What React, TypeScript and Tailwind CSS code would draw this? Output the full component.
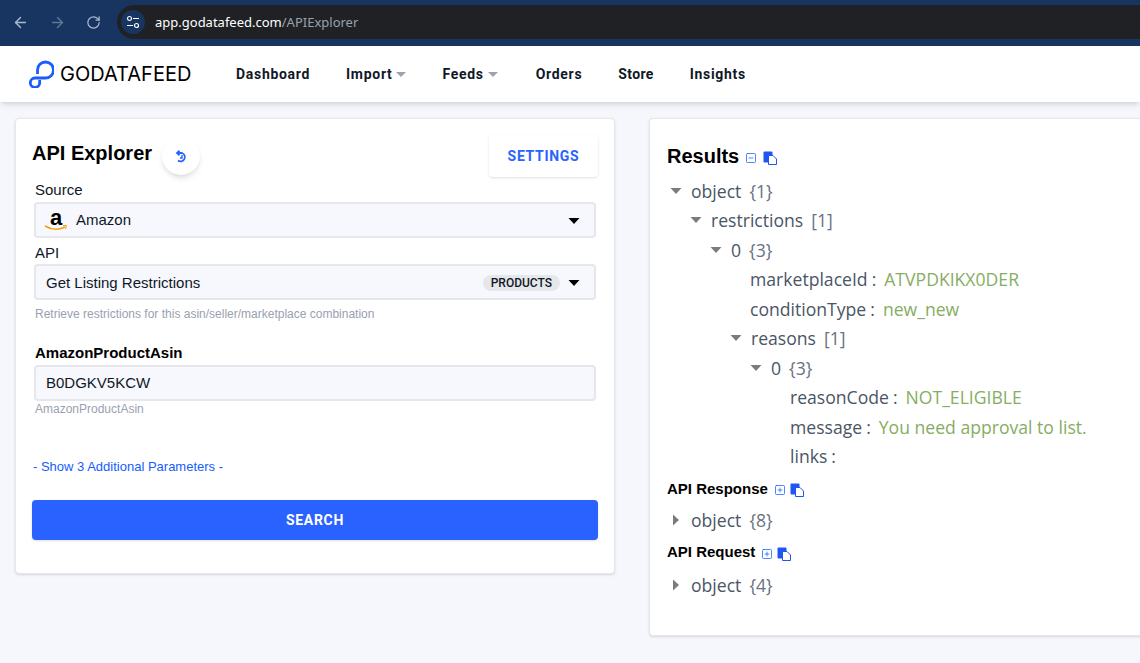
import React from "react";
import { ArrowLeft, ArrowRight, RotateCw, SquareMinus, SquarePlus } from "lucide-react";

const sans = { fontFamily: '"Liberation Sans", Arial, sans-serif' };
const roboto = { fontFamily: "Roboto, sans-serif" };

function Logo() {
  return (
    <svg width="26" height="28" viewBox="0 0 26 28" fill="none" stroke="#1a5cff" strokeWidth="2.800" className="shrink-0">
      <path d="M9.500 14 V10 A8 8 0 1 1 17.500 18 H7 A4.700 4.700 0 1 0 11.700 22.700 V20" />
    </svg>
  );
}

function NavCaret() {
  return (
    <svg width="10" height="5" viewBox="0 0 10 5" className="shrink-0">
      <path d="M0 0 H10 L5 5 Z" fill="#9ca3af" />
    </svg>
  );
}

function Caret({ open, dark }: { open?: boolean; dark?: boolean }) {
  return (
    <svg width="12" height="12" viewBox="0 0 12 12" className="shrink-0">
      {open ? (
        <path d="M0.500 3 H11.500 L6 9 Z" fill={dark ? "#000" : "#7c7c7c"} />
      ) : (
        <path d="M3 0.500 V11.500 L9 6 Z" fill="#7c7c7c" />
      )}
    </svg>
  );
}

function CopyIcon() {
  return (
    <svg width="14" height="14" viewBox="0 0 14 14" className="shrink-0">
      <rect x="0.500" y="0.500" width="9" height="11" rx="1" fill="#1f55f0" />
      <path d="M5.500 4.500 H10 L13.500 8 V13.500 H5.500 Z" fill="#fff" stroke="#1f55f0" strokeWidth="1" />
    </svg>
  );
}

function ResetIcon() {
  return (
    <svg width="13" height="13" viewBox="0 0 13 13" fill="none" stroke="#2962ff" strokeWidth="1.800" className="shrink-0">
      <path d="M4.500 0.800 L2 3 L4.500 5.200" />
      <path d="M2 3 H7 A4.300 4.300 0 1 1 3 10.500" />
      <path d="M7 5 V8 H5" strokeWidth="1.400" />
    </svg>
  );
}

function Node({
  depth,
  caret,
  name,
  count,
  value,
}: {
  depth: number;
  caret?: "open" | "closed";
  name: string;
  count?: string;
  value?: string;
}) {
  return (
    <div className="flex items-center h-[29.5px] text-[17.6px] text-gray-600 whitespace-nowrap" style={{ paddingLeft: depth * 20 }}>
      <span className="w-5 shrink-0 flex">{caret && <Caret open={caret === "open"} />}</span>
      <span className={caret ? "ml-px" : ""}>{name}</span>
      {count && <span className="ml-2 text-gray-500">{count}</span>}
      {value !== undefined && <span className="ml-1">:</span>}
      {value && <span className="ml-2 text-[#86ad62]">{value}</span>}
    </div>
  );
}

function Field({ children }: { children: React.ReactNode }) {
  return (
    <div className="h-9 flex items-center px-2.5 pt-0.5 rounded border-2 border-gray-200 bg-[#f7f8fd] text-gray-900">
      {children}
    </div>
  );
}

function SubHead({ title, className }: { title: string; className?: string }) {
  return (
    <div className={`flex items-center gap-1 h-7 ml-px text-[15px] font-bold text-black ${className ?? ""}`} style={sans}>
      {title}
      <SquarePlus size={12} strokeWidth={1.500} className="text-blue-600 ml-0.5 mt-0.5" />
      <span className="mt-0.5"><CopyIcon /></span>
    </div>
  );
}

export default function App() {
  return (
    <div className="h-[663px] overflow-hidden bg-[#f5f7fd] flex flex-col" style={sans}>
      <div className="h-[46px] shrink-0 bg-[#173560] flex items-center pl-3 pb-0.5 gap-5 text-[#a9b9cf]">
        <ArrowLeft size={17} />
        <ArrowRight size={17} className="text-[#5f7897]" />
        <RotateCw size={15} />
        <div className="flex-1 -ml-1 h-[34px] rounded-l-full bg-[#1f2125] flex items-center pl-1 gap-2.5 text-[13px]">
          <span className="w-6 h-6 rounded-full bg-[#173560] flex items-center justify-center">
            <svg width="14" height="14" viewBox="0 0 14 14" fill="none" stroke="#fff" strokeWidth="1.200">
              <circle cx="3.500" cy="3.500" r="2" />
              <path d="M7 3.500 H13 M1 10.500 H7" />
              <circle cx="10.500" cy="10.500" r="2" />
            </svg>
          </span>
          <span style={{ fontFamily: '"Noto Sans", sans-serif' }} className="text-white pt-px">
            app.godatafeed.com<span className="text-gray-400">/APIExplorer</span>
          </span>
        </div>
      </div>

      <div className="relative z-10 h-14 shrink-0 bg-white shadow-md flex items-center pl-7 gap-9 text-sm font-bold tracking-wider text-gray-900" style={roboto}>
        <div className="flex items-center gap-1.5 w-[172px]">
          <Logo />
          <span className="text-xl font-normal text-black tracking-normal" style={{ fontFamily: "Inter, sans-serif" }}>GODATAFEED</span>
        </div>
        <span>Dashboard</span>
        <span className="flex items-center gap-1">Import<NavCaret /></span>
        <span className="flex items-center gap-1 pr-0.5">Feeds<NavCaret /></span>
        <span>Orders</span>
        <span className="tracking-wide">Store</span>
        <span>Insights</span>
      </div>

      <div className="flex gap-[34px] pl-[15px] pt-4 items-start">
        <div className="w-[600px] shrink-0 h-[456px] bg-white rounded border border-gray-200 shadow-sm px-4 pt-4">
          <div className="flex items-start h-11">
            <h1 className="text-xl font-bold text-black mt-1">API Explorer</h1>
            <span className="ml-2.5 mt-0.5 w-9.5 h-9.5 rounded-full bg-white shadow-md flex items-center justify-center">
              <ResetIcon />
            </span>
            <button className="ml-auto w-[109px] h-[42px] rounded bg-white shadow text-sm font-bold tracking-wider text-[#2962ff]" style={roboto}>
              SETTINGS
            </button>
          </div>
          <div className="px-0.5 text-[15px] text-gray-900">
            <div className="ml-px">Source</div>
            <Field>
              <svg width="24" height="24" viewBox="0 0 24 24" className="mr-2 shrink-0 -ml-0.5 overflow-visible">
                <text x="6" y="16" fontSize="22" fontWeight="700" fontFamily="Liberation Sans" fill="#000">a</text>
                <path d="M1 17 Q11 23 21 18" fill="none" stroke="#f59e0b" strokeWidth="1.500" />
                <path d="M19 16.500 L22.500 16.500 L21.500 20" fill="none" stroke="#f59e0b" strokeWidth="1" />
              </svg>
              <span>Amazon</span>
              <span className="ml-auto mr-1"><Caret open dark /></span>
            </Field>
            <div className="mt-1 ml-px">API</div>
            <Field>
              <span>Get Listing Restrictions</span>
              <span className="ml-auto px-2 rounded-full bg-gray-200 font-medium text-xs text-gray-900" style={roboto}>PRODUCTS</span>
              <span className="ml-2 mr-1"><Caret open dark /></span>
            </Field>
            <div className="mt-1.5 ml-px text-xs text-gray-400">Retrieve restrictions for this asin/seller/marketplace combination</div>
            <div className="mt-5 ml-px font-bold text-black">AmazonProductAsin</div>
            <Field>
              <span>B0DGKV5KCW</span>
            </Field>
            <div className="ml-px text-xs text-gray-400">AmazonProductAsin</div>
            <div className="mt-10 text-[13px] text-blue-600 -ml-px">- Show 3 Additional Parameters -</div>
          </div>
          <button className="mt-6 w-full h-10 rounded bg-[#2962ff] shadow text-sm font-bold tracking-wider text-white" style={roboto}>
            SEARCH
          </button>
        </div>

        <div className="w-[520px] shrink-0 h-[518px] bg-white rounded-l border border-r-0 border-gray-200 shadow-sm pl-4 pt-4">
          <div className="flex items-center gap-1.5 h-10 pt-0.5 mb-px ml-px text-black">
            <span className="text-xl font-bold">Results</span>
            <SquareMinus size={12} strokeWidth={1.500} className="text-blue-600 mt-1" />
            <span className="mt-1"><CopyIcon /></span>
          </div>
          <div style={{ fontFamily: '"Open Sans", sans-serif' }}>
            <div className="pl-1">
              <Node depth={0} caret="open" name="object" count="{1}" />
              <Node depth={1} caret="open" name="restrictions" count="[1]" />
              <Node depth={2} caret="open" name="0" count="{3}" />
              <Node depth={3} name="marketplaceId" value="ATVPDKIKX0DER" />
              <Node depth={3} name="conditionType" value="new_new" />
              <Node depth={3} caret="open" name="reasons" count="[1]" />
              <Node depth={4} caret="open" name="0" count="{3}" />
              <Node depth={5} name="reasonCode" value="NOT_ELIGIBLE" />
              <Node depth={5} name="message" value="You need approval to list." />
              <Node depth={5} name="links" value="" />
            </div>
            <SubHead title="API Response" className="mt-1" />
            <div className="pl-1 mt-0.5"><Node depth={0} caret="closed" name="object" count="{8}" /></div>
            <SubHead title="API Request" className="mt-1" />
            <div className="pl-1 mt-1"><Node depth={0} caret="closed" name="object" count="{4}" /></div>
          </div>
        </div>
      </div>
    </div>
  );
}
